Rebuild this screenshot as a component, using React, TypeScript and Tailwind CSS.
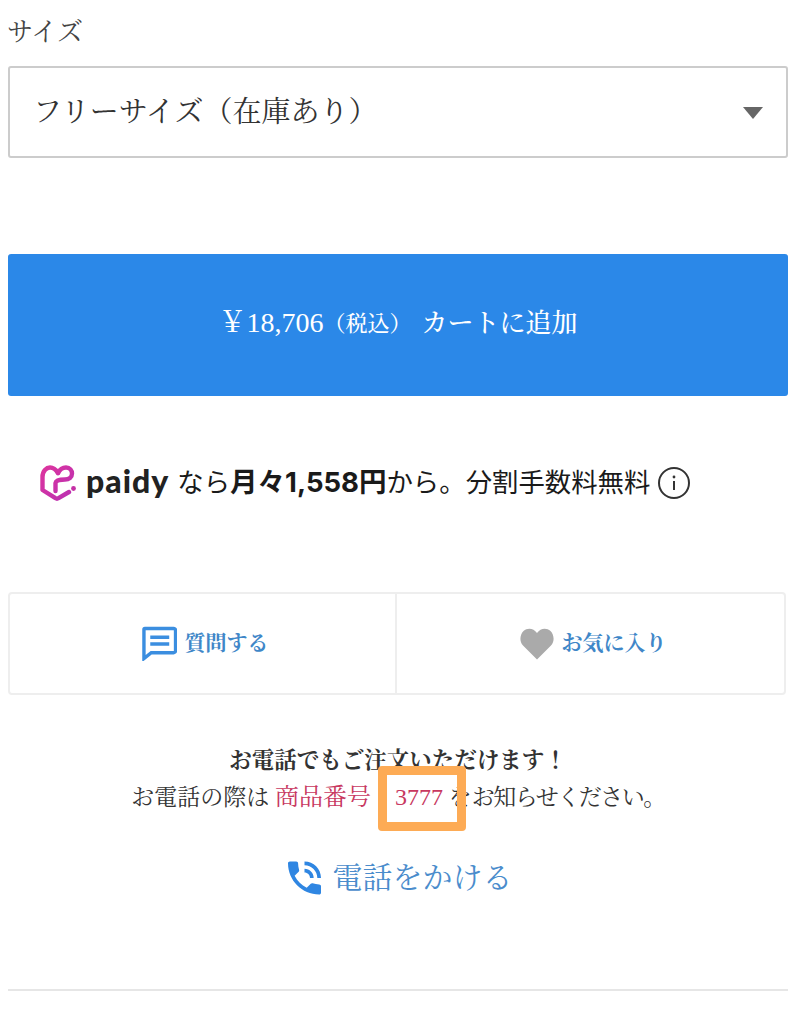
export default function App() {
  return (
    <div className="w-[796px] h-[1028px] bg-white overflow-hidden px-2 text-[#333] font-['Liberation_Serif','Noto_Serif_CJK_JP','Noto_Sans_CJK_JP',serif]">
      <div className="pt-[17px] h-[66px] text-[26px] leading-[32px] text-[#444] -ml-[1px]">サイズ</div>
      <div className="h-[92px] border-2 border-[#ccc] rounded-[3px] flex items-center justify-between pl-[23px] pr-[23px]">
        <span className="text-[29px] leading-[40px] text-[#333] whitespace-nowrap">フリーサイズ（在庫あり）</span>
        <svg width="20" height="13" viewBox="0 0 20 13"><path d="M0 1h20L10 13z" fill="#666" /></svg>
      </div>

      <div className="mt-[96px] h-[142px] bg-[#2b88e8] rounded-[3px] flex items-center justify-center pb-[4px] text-white text-[26px] font-medium whitespace-nowrap">
        <span className="text-[28px]">￥18,706</span>
        <span className="text-[22px]">（税込）</span>
        <span className="ml-[10px]">カートに追加</span>
      </div>

      <div className="mt-[63px] h-[48px] pl-[31px] flex items-center font-['Inter','Noto_Sans_CJK_JP',sans-serif] text-[26.400px] text-[#1a1a1a] whitespace-nowrap">
        <svg width="38" height="36" viewBox="0 0 38 36" fill="none" className="shrink-0">
          <defs>
            <linearGradient id="pd" x1="0" y1="0" x2="38" y2="36" gradientUnits="userSpaceOnUse">
              <stop offset="0" stopColor="#e0359c" />
              <stop offset="1" stopColor="#b52fb5" />
            </linearGradient>
          </defs>
          <path d="M30 27L19.500 33.200C18.500 33.800 17.500 33.800 16.500 33.200L3.500 25V12C3.500 6 7.500 2.500 11 2.500C15 2.500 17.500 5.500 19 8" stroke="url(#pd)" strokeWidth="4.400" strokeLinecap="round" strokeLinejoin="round" />
          <path d="M19 8C21 4 24 2.500 27 2.500C31 2.500 33 5.500 33 8.500C33 12.500 30 14.500 26 14.500C21 14.500 17 15 16.500 18V26" stroke="url(#pd)" strokeWidth="4.400" strokeLinecap="round" strokeLinejoin="round" />
          <circle cx="34.500" cy="23.500" r="2.400" fill="#c52fa5" />
        </svg>
        <span className="ml-[9px] font-['Lato',sans-serif] font-black text-[32px] leading-none tracking-[1px] text-[#222] -mt-[4px]">paidy</span>
        <span className="ml-[8px]">なら</span>
        <span className="font-bold text-[27.500px]">月々1,558円</span>
        <span>から。分割手数料無料</span>
        <svg width="32" height="32" viewBox="0 0 32 32" fill="none" className="ml-[8px] shrink-0">
          <circle cx="16" cy="16" r="15" stroke="#333" strokeWidth="2" />
          <path d="M16 14v9" stroke="#333" strokeWidth="2" />
          <circle cx="16" cy="10" r="1.400" fill="#333" />
        </svg>
      </div>

      <div className="mt-[85px] w-[778px] h-[103px] border-2 border-[#eee] rounded-[4px] flex">
        <div className="w-[387px] border-r-2 border-[#eee] flex items-center justify-center gap-[8px] pl-[5px] text-[21px] font-bold text-[#3f87c8]">
          <svg width="35" height="35" viewBox="0 0 36 36" fill="none" className="shrink-0">
            <path d="M3 2.500H32.500C33.500 2.500 34.500 3.500 34.500 4.500V25.500C34.500 26.500 33.500 27.500 32.500 27.500H9.500L2 33.500V3.500C2 3 2.500 2.500 3 2.500Z" stroke="#3b8ee0" strokeWidth="3.500" />
            <path d="M8.500 11.500H28M8.500 18.500H28" stroke="#3b8ee0" strokeWidth="3.500" />
          </svg>
          <span>質問する</span>
        </div>
        <div className="flex-1 flex items-center justify-center gap-[8px] pl-[5px] text-[21px] font-bold text-[#3f87c8]">
          <svg width="34" height="32" viewBox="0 0 34 32" className="shrink-0">
            <path d="M17 31.500L3 17.500C-1 13.500 0 6.500 3.500 3C7.500 -0.500 13.500 0 17 5C20.500 0 26.500 -0.500 30.500 3C34 6.500 35 13.500 31 17.500Z" fill="#aaa" />
          </svg>
          <span>お気に入り</span>
        </div>
      </div>

      <div className="relative mt-[48px] text-center text-[23px] leading-[36px] text-[#333] whitespace-nowrap">
        <div className="font-bold text-[22.500px]">お電話でもご注文いただけます！</div>
        <div>
          お電話の際は <span className="text-[#c8385f] text-[24px]">商品番号　3777</span> を<span className="tracking-[-1.500px]">お知らせください。</span>
        </div>
        <div className="absolute left-[370px] top-[23px] w-[88px] h-[65px] border-[9px] border-[#fdab55] rounded-[4px]" />
      </div>

      <div className="mt-[40px] flex items-center justify-center gap-[12px] pl-[4px] text-[30px] leading-[44px] text-[#4a8ccc]">
        <svg width="33" height="34" viewBox="3 3 18 18" className="shrink-0">
          <path d="M20 15.500c-1.250 0-2.450-.2-3.570-.57-.35-.11-.74-.03-1.020.24l-2.200 2.200c-2.830-1.440-5.150-3.750-6.590-6.590l2.200-2.210c.28-.26.36-.65.25-1C8.700 6.450 8.500 5.250 8.500 4c0-.55-.45-1-1-1H4c-.55 0-1 .45-1 1 0 9.390 7.610 17 17 17 .55 0 1-.45 1-1v-3.500c0-.55-.45-1-1-1zM19 12h2c0-4.970-4.030-9-9-9v2c3.870 0 7 3.130 7 7zm-4 0h2c0-2.760-2.240-5-5-5v2c1.660 0 3 1.340 3 3z" fill="#2f86e2" />
        </svg>
        <span>電話をかける</span>
      </div>

      <div className="mt-[89px] h-[2px] bg-[#e6e6e6]" />
    </div>
  );
}
